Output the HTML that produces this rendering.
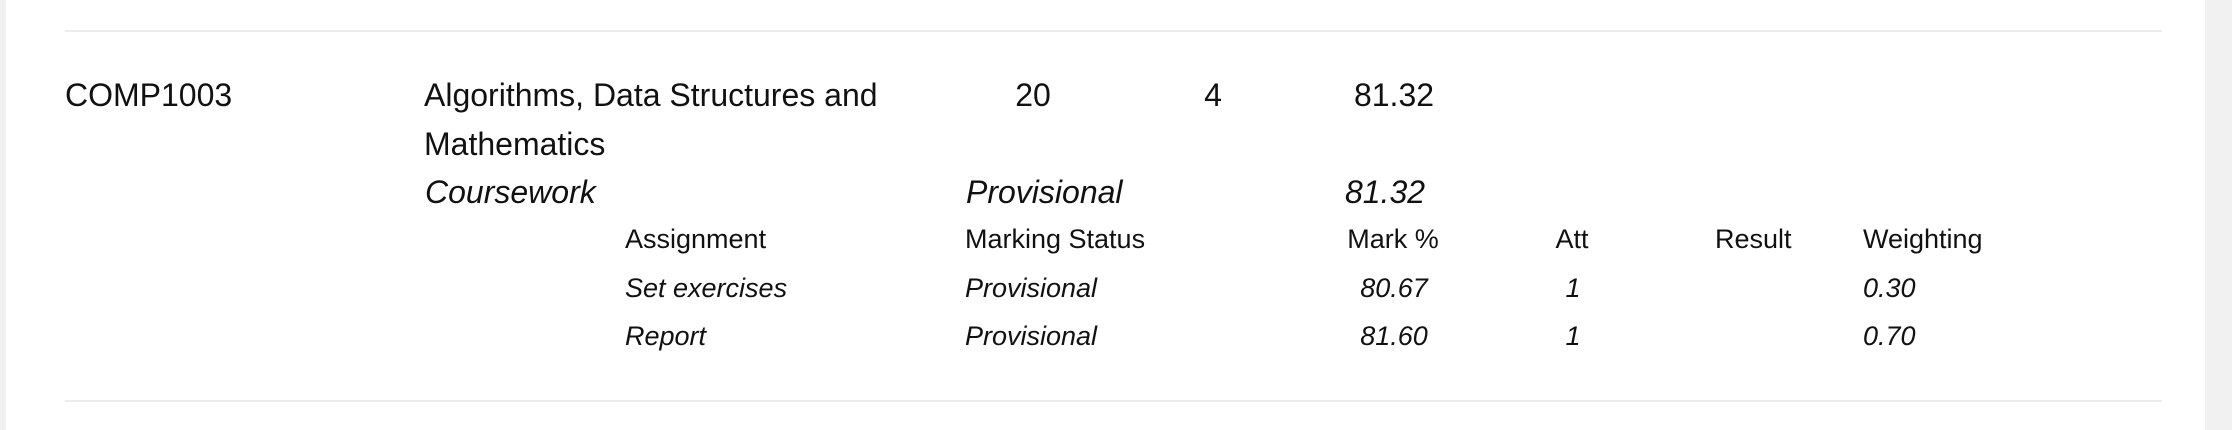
<!DOCTYPE html>
<html><head><meta charset="utf-8"><style>
html,body{margin:0;padding:0;background:#fff;width:2232px;height:430px;overflow:hidden;position:relative;font-family:"Liberation Sans",Arial,sans-serif;color:#111;}
.s{position:absolute;white-space:nowrap;line-height:48px;}
.b{font-size:32px;}
.m{font-size:27px;}
.i{font-style:italic;}
.c{transform:translateX(-50%);}
.line{position:absolute;left:65px;width:2097px;height:2px;background:#ececec;}
</style></head><body>
<div style="position:absolute;left:0;top:0;width:6px;height:430px;background:#f1f1f1"></div>
<div style="position:absolute;left:2205px;top:0;width:27px;height:430px;background:#f1f1f1"></div>
<div class="line" style="top:30px"></div>
<div class="line" style="top:400px"></div>

<div class="s b" style="left:65px;top:71px">COMP1003</div>
<div class="s b" style="left:424px;top:71px">Algorithms, Data Structures and</div>
<div class="s b" style="left:424px;top:120px">Mathematics</div>
<div class="s b c" style="left:1033px;top:71px">20</div>
<div class="s b c" style="left:1213px;top:71px">4</div>
<div class="s b c" style="left:1394px;top:71px">81.32</div>

<div class="s b i" style="left:425px;top:168px">Coursework</div>
<div class="s b i" style="left:966px;top:168px">Provisional</div>
<div class="s b i c" style="left:1385px;top:168px">81.32</div>

<div class="s m" style="left:625px;top:215px">Assignment</div>
<div class="s m" style="left:965px;top:215px">Marking Status</div>
<div class="s m c" style="left:1393px;top:215px">Mark %</div>
<div class="s m c" style="left:1572px;top:215px">Att</div>
<div class="s m" style="left:1715px;top:215px">Result</div>
<div class="s m" style="left:1863px;top:215px">Weighting</div>

<div class="s m i" style="left:625px;top:264px">Set exercises</div>
<div class="s m i" style="left:965px;top:264px">Provisional</div>
<div class="s m i c" style="left:1394px;top:264px">80.67</div>
<div class="s m i c" style="left:1573px;top:264px">1</div>
<div class="s m i" style="left:1863px;top:264px">0.30</div>

<div class="s m i" style="left:625px;top:312px">Report</div>
<div class="s m i" style="left:965px;top:312px">Provisional</div>
<div class="s m i c" style="left:1394px;top:312px">81.60</div>
<div class="s m i c" style="left:1573px;top:312px">1</div>
<div class="s m i" style="left:1863px;top:312px">0.70</div>
</body></html>
